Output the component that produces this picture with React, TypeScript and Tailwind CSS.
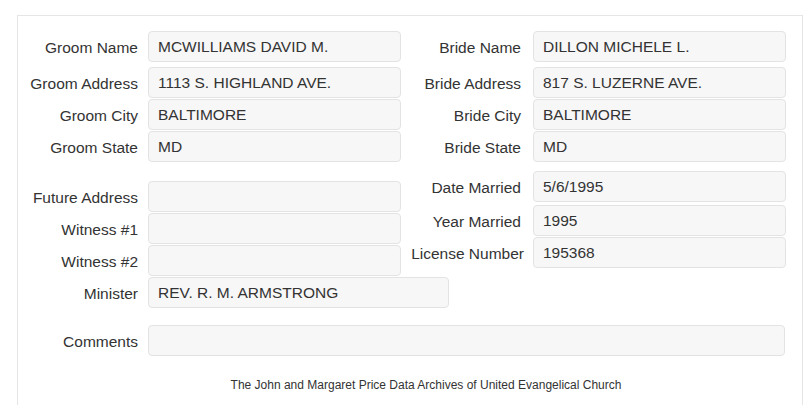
import React from 'react';

const font = { fontFamily: '"Liberation Sans", Arial, sans-serif' };

interface FieldProps {
    label: string;
    value?: string;
    labelW?: string;
    gap?: string;
    inputW?: string;
}

/** A right-aligned label followed by a read-only looking box. */
const Field: React.FC<FieldProps> = ({ label, value = '', labelW = 'w-[120px]', gap = 'mr-[10px]', inputW = 'w-[253px]' }) => (
    <div className="flex items-center">
        <div className={`${labelW} ${gap} shrink-0 text-right whitespace-nowrap text-[15.5px] text-[#333] pt-[3px]`}>{label}</div>
        <div className={`${inputW} h-[31px] shrink-0 flex items-center pl-[9px] rounded-[4px] border border-[#e3e3e3] bg-[#f7f7f7] text-[15.5px] text-[#333] whitespace-nowrap overflow-hidden`}>
            {value}
        </div>
    </div>
);

const topRows = [
    ['Groom Name', 'MCWILLIAMS DAVID M.', 'Bride Name', 'DILLON MICHELE L.'],
    ['Groom Address', '1113 S. HIGHLAND AVE.', 'Bride Address', '817 S. LUZERNE AVE.'],
    ['Groom City', 'BALTIMORE', 'Bride City', 'BALTIMORE'],
    ['Groom State', 'MD', 'Bride State', 'MD'],
];

export default function App() {
    return (
        <div className="w-[805px] h-[405px] overflow-hidden bg-white pt-[15px] pl-[17px]" style={font}>
            <div className="w-[786px] h-[420px] border border-[#e5e5e5] pt-[15px]">
                {/* groom / bride block */}
                <div className="flex flex-col">
                    {topRows.map((r, i) => (
                        <div key={r[0]} className={`flex ${i === 0 ? '' : i === 1 ? 'mt-[5px]' : 'mt-[1px]'}`}>
                            <Field label={r[0]} value={r[1]} />
                            <Field label={r[2]} value={r[3]} gap="mr-[12px]" />
                        </div>
                    ))}
                </div>

                {/* other details */}
                <div className="flex items-start">
                    <div className="flex flex-col mt-[19px] gap-[1px]">
                        <Field label="Future Address" />
                        <Field label="Witness #1" />
                        <Field label="Witness #2" />
                    </div>
                    <div className="flex flex-col mt-[9px]">
                        <Field label="Date Married" value="5/6/1995" gap="mr-[12px]" />
                        <div className="mt-[3px]">
                            <Field label="Year Married" value="1995" gap="mr-[12px]" />
                        </div>
                        <div className="mt-[1px]">
                            <Field label="License Number" value="195368" labelW="w-[123px]" gap="mr-[9px]" />
                        </div>
                    </div>
                </div>
                <div className="mt-[1px]">
                    <Field label="Minister" value="REV. R. M. ARMSTRONG" inputW="w-[301px]" />
                </div>

                <div className="mt-[17px]">
                    <Field label="Comments" inputW="w-[637px]" />
                </div>

                <div className="mt-[20px] pl-[32px] text-center text-[12px] text-[#333]">
                    The John and Margaret Price Data Archives of United Evangelical Church
                </div>
            </div>
        </div>
    );
}
